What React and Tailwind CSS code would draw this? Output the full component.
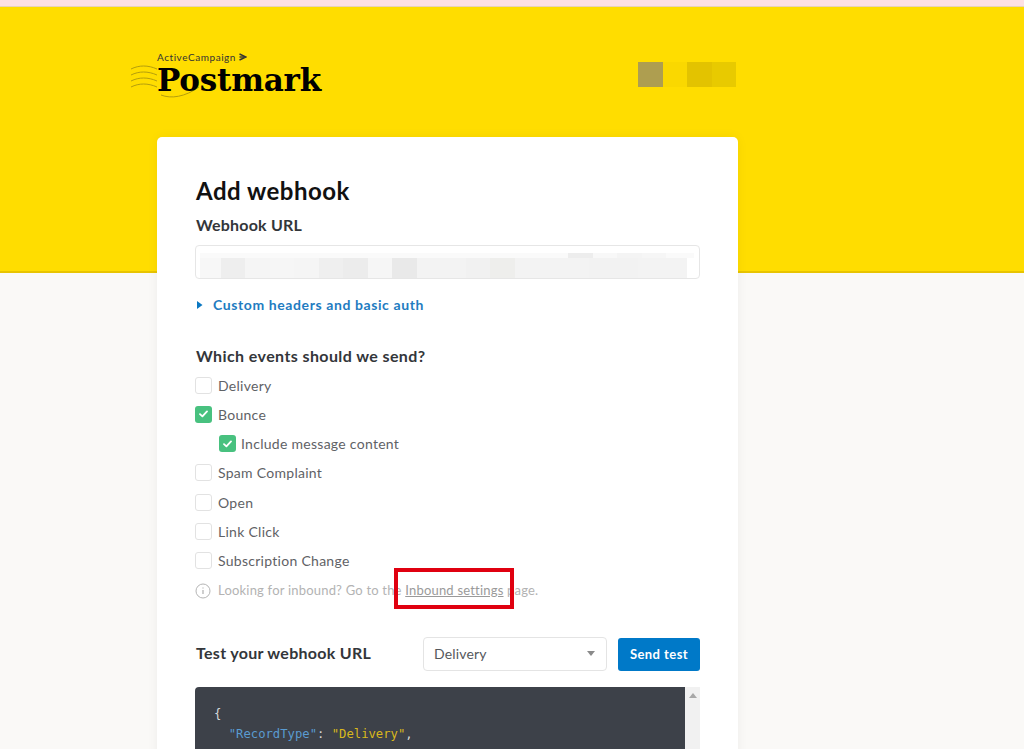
import React from "react";

// pixelated url field, two tiers of blur cells
const blurTop = [
  { w: 368, c: "bg-[#fafafa]" },
  { w: 25, c: "bg-[#ededed]" },
  { w: 24, c: "bg-[#f8f8f8]" },
  { w: 25, c: "bg-[#f4f4f4]" },
  { w: 24, c: "bg-[#f6f6f6]" },
  { w: 28, c: "bg-[#fafafa]" },
];

const blurBottom = [
  { w: 21, c: "bg-[#f7f7f7]" },
  { w: 24, c: "bg-[#eeeeee]" },
  { w: 25, c: "bg-[#f5f5f5]" },
  { w: 24, c: "bg-[#f6f6f6]" },
  { w: 25, c: "bg-[#f5f5f5]" },
  { w: 24, c: "bg-[#efefef]" },
  { w: 25, c: "bg-[#ececec]" },
  { w: 24, c: "bg-[#f6f6f6]" },
  { w: 25, c: "bg-[#e9e9e9]" },
  { w: 49, c: "bg-[#f3f3f3]" },
  { w: 24, c: "bg-[#f1f1f1]" },
  { w: 25, c: "bg-[#eeeeec]" },
  { w: 74, c: "bg-[#f3f3f3]" },
  { w: 49, c: "bg-[#f2f2f2]" },
  { w: 49, c: "bg-[#f3f3f3]" },
];

const Checkbox = ({ label, checked, indent }) => (
  <div className={`flex h-[29.25px] items-center ${indent ? "gap-[5px] pl-[24px]" : "gap-[6px]"}`}>
    {checked ? (
      <span className="flex h-[17px] w-[17px] items-center justify-center rounded-[3px] bg-[#48c17f]">
        <svg width="9" height="8" viewBox="0 0 9 8" fill="none">
          <path d="M1 4.2 3.4 6.4 8 1.4" stroke="#fff" strokeWidth="1.8" strokeLinecap="round" strokeLinejoin="round" />
        </svg>
      </span>
    ) : (
      <span className="h-[17px] w-[17px] rounded-[3px] border border-[#e2e2e2] bg-white"></span>
    )}
    <span className="text-[14px] tracking-[0.28px] text-[#5f6266]">{label}</span>
  </div>
);

const Logo = () => (
  <div className="relative w-[192px] pl-[26px]">
    <svg className="absolute left-0 top-[14px]" width="76" height="34" viewBox="0 0 76 34" fill="none" stroke="#9c8a12" strokeWidth="1" opacity="0.75">
      <path d="M0 4C8 0 17 0 26 4" />
      <path d="M0 10C8 6 17 6 26 10" />
      <path d="M0 16C8 12 17 12 26 16" />
      <path d="M0 22C8 18 17 18 26 22" />
      <path d="M30 30C40 34 54 32 68 22" />
    </svg>
    <div className="flex h-[12px] items-center gap-[3px] text-[10px] leading-[12px] tracking-[0.55px] text-[#333]">
      <span>ActiveCampaign</span>
      <svg width="8" height="8" viewBox="0 0 8 8" fill="none" stroke="#333" strokeWidth="1.4">
        <path d="M0.5 1 7 4 0.5 7" />
        <path d="M0.5 4H5" />
      </svg>
    </div>
    <div className="relative mt-[3px] font-['DejaVu_Serif',serif] text-[31px] font-bold leading-[29px] tracking-[-0.2px] text-black">
      Postmark
    </div>
  </div>
);

export default function App() {
  return (
    <div className="relative h-[749px] overflow-hidden bg-[#faf9f7] font-['Lato',sans-serif]">
      {/* top strip */}
      <div className="h-[7px] border-b border-[#e8d3b8] bg-[#fde0e4]"></div>

      {/* yellow header */}
      <div className="h-[266px] border-b-2 border-[#e8c400] bg-[#ffdd00] pl-[131px] pt-[44px]">
        <div className="flex w-[605px] items-start justify-between">
          <Logo />
          <div className="mt-[11px] flex h-[25px]">
            <div className="w-[25px] bg-[#ae9e50]"></div>
            <div className="w-[24px] bg-[#fad800]"></div>
            <div className="w-[25px] bg-[#e3c300]"></div>
            <div className="w-[24px] bg-[#e8ca00]"></div>
          </div>
        </div>
      </div>

      {/* card */}
      <div className="ml-[157px] mt-[-136px] h-[700px] w-[581px] rounded-t-[5px] bg-white px-[38px] pt-[37px] shadow-[0_0_12px_rgba(0,0,0,0.05)]">
        <h1 className="pl-px text-[24px] font-bold leading-[34px] tracking-[0.5px] text-[#111]">Add webhook</h1>
        <label className="mt-[5px] block pl-px text-[16px] font-bold leading-[24px] tracking-[0.2px] text-[#33363a]">
          Webhook URL
        </label>
        <div className="mt-[8px] h-[34px] w-[505px] overflow-hidden rounded-[4px] border border-[#e6e6e6] bg-white pl-[4px] pt-[7px]">
          <div className="flex h-[5px] w-[495px]">
            {blurTop.map((b, i) => (
              <div key={i} className={`h-full ${b.c}`} style={{ width: b.w }}></div>
            ))}
          </div>
          <div className="flex h-[21px] w-[492px]">
            {blurBottom.map((b, i) => (
              <div key={i} className={`h-full ${b.c}`} style={{ width: b.w }}></div>
            ))}
          </div>
        </div>

        <div className="mt-[17px] flex items-center gap-[10px] pl-px text-[14px] font-bold leading-[18px] tracking-[0.6px] text-[#1f7cc1]">
          <svg width="7" height="8" viewBox="0 0 7 8">
            <path d="M1 0 6.5 4 1 8Z" fill="#0b78c2" />
          </svg>
          <span>Custom headers and basic auth</span>
        </div>

        <h2 className="mt-[30px] pl-px text-[16px] font-bold leading-[24px] tracking-[0.4px] text-[#33363a]">
          Which events should we send?
        </h2>
        <div className="mt-[2.5px]">
          <Checkbox label="Delivery" />
          <Checkbox label="Bounce" checked />
          <Checkbox label="Include message content" checked indent />
          <Checkbox label="Spam Complaint" />
          <Checkbox label="Open" />
          <Checkbox label="Link Click" />
          <Checkbox label="Subscription Change" />
        </div>

        <div className="mt-[6.5px] flex h-[18px] items-center gap-[7px] text-[13px] tracking-[0.2px] text-[#b3b3b3]">
          <svg width="16" height="16" viewBox="0 0 16 16" fill="none" stroke="#b5b5b5">
            <circle cx="8" cy="8" r="7" />
            <path d="M8 7v4M8 4.6v1" strokeWidth="1.3" />
          </svg>
          <span>
            Looking for inbound? Go to the <span className="text-[#9a9a9a] underline">Inbound settings</span> page.
          </span>
        </div>

        <div className="mt-[37px] flex h-[34px] items-center">
          <div className="w-[228px] pb-[2px] pl-px text-[16px] font-bold tracking-[0.3px] text-[#33363a]">
            Test your webhook URL
          </div>
          <div className="flex h-[34px] w-[184px] items-center justify-between rounded-[4px] border border-[#e4e4e4] bg-white pb-px pl-[10px] pr-[11px] text-[14px] tracking-[0.15px] text-[#55585c]">
            <span>Delivery</span>
            <svg width="8" height="5" viewBox="0 0 8 5">
              <path d="M0 0h8L4 5Z" fill="#8a8a8a" />
            </svg>
          </div>
          <button className="ml-[11px] mt-[2px] h-[33px] w-[82px] rounded-[3px] bg-[#0079c8] pb-px text-[13px] font-bold tracking-[0.45px] text-white">
            Send test
          </button>
        </div>

        <div className="mt-[16px] flex h-[200px] w-[505px]">
          <pre className="h-full w-[490px] overflow-hidden rounded-tl-[4px] bg-[#3d4149] pl-[19px] pt-[17px] font-['DejaVu_Sans_Mono',monospace] text-[12.22px] leading-[20px] text-[#d6d8da]">
            <div>{"{"}</div>
            <div>
              {"  "}
              <span className="text-[#5a9bd0]">"RecordType"</span>: <span className="text-[#d9b81c]">"Delivery"</span>,
            </div>
            <div>
              {"  "}
              <span className="text-[#5a9bd0]">"ServerID"</span>: <span className="text-[#cfd2b0]">23</span>,
            </div>
          </pre>
          <div className="flex h-full w-[15px] justify-center bg-[#f1f1f1] pt-[6px]">
            <svg width="8" height="5" viewBox="0 0 8 5">
              <path d="M4 0 8 5H0Z" fill="#a8a8a8" />
            </svg>
          </div>
        </div>
      </div>

      {/* red annotation */}
      <div className="absolute left-[394px] top-[568px] h-[41px] w-[120px] border-[4px] border-[#e00010]"></div>
    </div>
  );
}
